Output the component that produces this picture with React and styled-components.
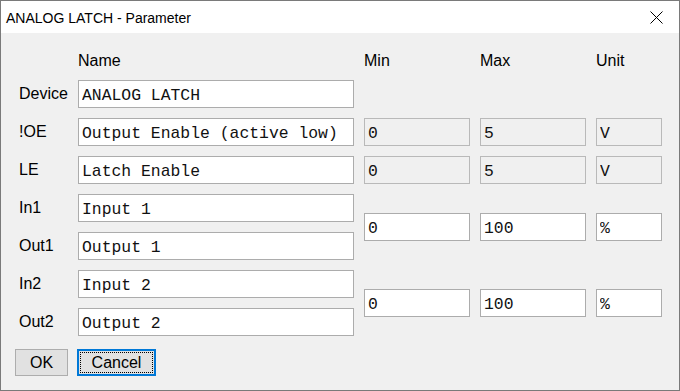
import React from 'react';
import styled, { createGlobalStyle } from 'styled-components';

const GlobalStyle = createGlobalStyle`
  html, body {
    margin: 0;
    padding: 0;
    background: #ffffff;
  }
  * {
    box-sizing: border-box;
  }
`;

const Window = styled.div`
  width: 680px;
  height: 391px;
  border: 1px solid #7a7a7a;
  display: flex;
  flex-direction: column;
  font-family: 'Liberation Sans', Arial, sans-serif;
  color: #000;
  overflow: hidden;
`;

const TitleBar = styled.div`
  height: 32px;
  background: #ffffff;
  display: flex;
  align-items: center;
  justify-content: space-between;
  padding-left: 5px;
  flex-shrink: 0;
`;

const Title = styled.span`
  font-size: 14px;
  line-height: 16px;
  margin-top: 1px;
`;

const CloseButton = styled.div`
  width: 44px;
  height: 32px;
  display: flex;
  align-items: center;
  justify-content: center;
  margin-right: 1px;
`;

const Body = styled.div`
  flex: 1;
  background: #f0f0f0;
  padding: 0 0 0 18px;
`;

const FormGrid = styled.div`
  display: grid;
  grid-template-columns: 49px 276px 106px 106px 66px;
  grid-template-rows: 37px repeat(7, 28px);
  column-gap: 10px;
  row-gap: 10px;
`;

const Header = styled.div`
  grid-column: ${({ col }) => col};
  grid-row: 1;
  align-self: end;
  font-size: 16px;
  line-height: 18px;
`;

const Label = styled.div`
  grid-column: 1;
  grid-row: ${({ row }) => row};
  align-self: center;
  font-size: 16px;
  line-height: 18px;
  white-space: nowrap;
`;

const Field = styled.input`
  grid-column: ${({ col }) => col};
  grid-row: ${({ row }) => row};
  align-self: center;
  width: 100%;
  height: 28px;
  margin: 0;
  padding: 2px 3px 0;
  border: 1px solid ${({ $off }) => ($off ? '#b9b9b9' : '#acacac')};
  background: ${({ $off }) => ($off ? '#f0f0f0' : '#ffffff')};
  font-family: 'Liberation Mono', 'Courier New', monospace;
  font-size: 16.4px;
  color: #111;
  outline: none;
  border-radius: 0;
`;

const ButtonRow = styled.div`
  display: flex;
  gap: 9px;
  margin: 13px 0 0 -4px;
`;

const Button = styled.button`
  width: ${({ w }) => w}px;
  height: 27px;
  margin: 0;
  padding: 0;
  background: #e1e1e1;
  border: 1px solid ${({ $focus }) => ($focus ? '#0078d7' : '#adadad')};
  font-family: 'Liberation Sans', Arial, sans-serif;
  font-size: 16px;
  color: #000;
  position: relative;
  ${({ $focus }) =>
    $focus &&
    `
    box-shadow: inset 0 0 0 1px #0078d7;
    &::after {
      content: '';
      position: absolute;
      inset: 2px;
      border: 1px dotted #000;
    }
  `}
`;

const rows = [
  { label: 'Device', name: 'ANALOG LATCH' },
  { label: '!OE', name: 'Output Enable (active low)', min: '0', max: '5', unit: 'V', off: true },
  { label: 'LE', name: 'Latch Enable', min: '0', max: '5', unit: 'V', off: true },
  { label: 'In1', name: 'Input 1', min: '0', max: '100', unit: '%', span: true },
  { label: 'Out1', name: 'Output 1' },
  { label: 'In2', name: 'Input 2', min: '0', max: '100', unit: '%', span: true },
  { label: 'Out2', name: 'Output 2' },
];

function CloseIcon() {
  return (
    <svg width="13" height="13" viewBox="0 0 13 13">
      <path d="M0.5 0.5 L12.5 12.5 M12.5 0.5 L0.5 12.5" stroke="#000" strokeWidth="1" fill="none" />
    </svg>
  );
}

export default function App() {
  return (
    <>
      <GlobalStyle />
      <Window>
        <TitleBar>
          <Title>ANALOG LATCH - Parameter</Title>
          <CloseButton>
            <CloseIcon />
          </CloseButton>
        </TitleBar>
        <Body>
          <FormGrid>
            <Header col={2}>Name</Header>
            <Header col={3}>Min</Header>
            <Header col={4}>Max</Header>
            <Header col={5}>Unit</Header>
            {rows.map((r, i) => {
              const row = i + 2;
              const span = r.span ? `${row} / span 2` : row;
              return (
                <React.Fragment key={r.label}>
                  <Label row={row}>{r.label}</Label>
                  <Field col={2} row={row} value={r.name} readOnly />
                  {r.min !== undefined && (
                    <>
                      <Field col={3} row={span} $off={r.off} value={r.min} readOnly />
                      <Field col={4} row={span} $off={r.off} value={r.max} readOnly />
                      <Field col={5} row={span} $off={r.off} value={r.unit} readOnly />
                    </>
                  )}
                </React.Fragment>
              );
            })}
          </FormGrid>
          <ButtonRow>
            <Button w={53}>OK</Button>
            <Button w={79} $focus>Cancel</Button>
          </ButtonRow>
        </Body>
      </Window>
    </>
  );
}
